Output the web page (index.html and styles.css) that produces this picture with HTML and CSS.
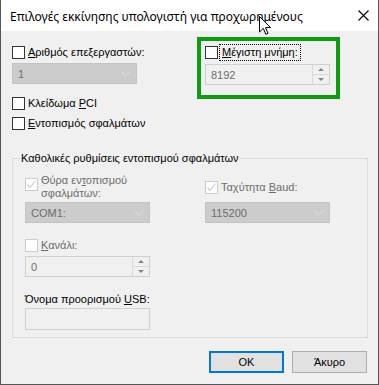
FILE: index.html
```html
<!DOCTYPE html>
<html lang="el">
<head>
  <meta charset="UTF-8">
  <meta name="viewport" content="width=device-width, initial-scale=1.0">
  <title>Επιλογές εκκίνησης για προχωρημένους</title>
  <link rel="stylesheet" href="styles.css">
</head>
<body>
<div class="window">
  <div class="titlebar">
    <span class="title">Επιλογές εκκίνησης υπολογιστή για προχωρημένους</span>
    <svg class="close" width="11" height="11" viewBox="0 0 11 11">
      <path d="M0.5 0.5 L10.5 10.5 M10.5 0.5 L0.5 10.5" stroke="#000" stroke-width="1.1" fill="none"/>
    </svg>
  </div>

  <div class="content">
    <div class="top">
      <div class="col">
        <label class="check">
          <span class="box"></span>
          <span><u>Α</u>ριθμός επεξεργαστών:</span>
        </label>
        <div class="combo combo-first">
          <span>1</span>
          <svg class="chevron" width="10" height="6" viewBox="0 0 10 6"><path d="M0.5 0.5 L5 5 L9.5 0.5" stroke="#dedede" fill="none"/></svg>
        </div>
        <label class="check check-pci">
          <span class="box"></span>
          <span>Κλείδωμα <u>P</u>CI</span>
        </label>
        <label class="check check-debug">
          <span class="box"></span>
          <span><u>Ε</u>ντοπισμός σφαλμάτων</span>
        </label>
      </div>

      <div class="col highlight">
        <label class="check">
          <span class="box"></span>
          <span class="focus"><u>Μ</u>έγιστη μνήμη:</span>
        </label>
        <div class="spin spin-mem">
          <span>8192</span>
          <div class="spin-btns">
            <span class="arrow up"></span>
            <span class="arrow down"></span>
          </div>
        </div>
      </div>
    </div>

    <fieldset class="group">
      <legend>Καθολικές ρυθμίσεις εντοπισμού σφαλμάτων</legend>
      <div class="group-grid">
        <label class="check check-port disabled">
          <span class="box checked">
            <svg width="11" height="11" viewBox="0 0 11 11"><path d="M1.5 5.5 L4 8.5 L9.5 1.5" stroke="#cfcfcf" stroke-width="1.2" fill="none"/></svg>
          </span>
          <span>Θύρα εν<u>τ</u>οπισμού<br>σφαλμάτων:</span>
        </label>
        <label class="check check-baud disabled">
          <span class="box checked">
            <svg width="11" height="11" viewBox="0 0 11 11"><path d="M1.5 5.5 L4 8.5 L9.5 1.5" stroke="#cfcfcf" stroke-width="1.2" fill="none"/></svg>
          </span>
          <span>Ταχύτητα <u>B</u>aud:</span>
        </label>

        <div class="combo combo-group">
          <span>COM1:</span>
          <svg class="chevron" width="10" height="6" viewBox="0 0 10 6"><path d="M0.5 0.5 L5 5 L9.5 0.5" stroke="#dedede" fill="none"/></svg>
        </div>
        <div class="combo combo-group">
          <span>115200</span>
          <svg class="chevron" width="10" height="6" viewBox="0 0 10 6"><path d="M0.5 0.5 L5 5 L9.5 0.5" stroke="#dedede" fill="none"/></svg>
        </div>

        <label class="check check-channel disabled left">
          <span class="box"></span>
          <span><u>Κ</u>ανάλι:</span>
        </label>
        <div class="spin spin-channel left">
          <span>0</span>
          <div class="spin-btns">
            <span class="arrow up"></span>
            <span class="arrow down"></span>
          </div>
        </div>
        <div class="field-label left">Όνομα προορισμού <u>U</u>SB:</div>
        <div class="textbox left"></div>
      </div>
    </fieldset>

    <div class="buttons">
      <button class="btn default">OK</button>
      <button class="btn">Άκυρο</button>
    </div>
  </div>

  <svg class="cursor" width="13" height="20" viewBox="0 0 13 20">
    <path d="M0.5 0.5 L0.5 16 L4.3 12.4 L6.8 18.3 L9 17.4 L6.6 11.6 L11.6 11.6 Z" fill="#fff" stroke="#000" stroke-width="1"/>
  </svg>
</div>
</body>
</html>
```

FILE: styles.css
```css
body {
  margin: 0;
  background-color: #f0f0f0;
}
.window {
  position: relative;
  width: 379px;
  height: 385px;
  box-sizing: border-box;
  border: 1px solid #555;
  border-top: none;
  background-color: #f0f0f0;
  font-family: "Liberation Sans", Arial, sans-serif;
  font-size: 11px;
  color: #000;
}
.titlebar {
  height: 31px;
  background-color: #fff;
  display: flex;
  align-items: center;
  justify-content: space-between;
  padding: 0 9px 0 9px;
}
.title {
  font-family: "Noto Sans", "Open Sans", sans-serif;
  font-size: 12px;
  padding-top: 1px;
}
.close {
  margin-right: 0;
}
.content {
  padding: 15px 10px 0 11px;
}
.top {
  display: grid;
  grid-template-columns: 125px 125px;
  column-gap: 68px;
}
.col {
  display: flex;
  flex-direction: column;
}
.highlight {
  position: relative;
}
.highlight::after {
  content: "";
  position: absolute;
  left: -8px;
  top: -9px;
  width: 143px;
  height: 62px;
  box-sizing: border-box;
  border: 4px solid #119b11;
}

/* checkboxes */
.check {
  display: flex;
  align-items: center;
  gap: 3px;
  line-height: 13px;
  white-space: nowrap;
}
.box {
  width: 13px;
  height: 13px;
  box-sizing: border-box;
  border: 1px solid #333;
  background-color: #fff;
  flex: none;
  display: flex;
  align-items: center;
  justify-content: center;
}
.disabled {
  color: #6d6d6d;
}
.disabled .box {
  border-color: #cccccc;
}
.check-pci {
  margin-top: 13px;
}
.check-debug {
  margin-top: 7px;
}
.focus {
  outline: 1px dotted #000;
  outline-offset: 1px;
  padding: 0 1px;
}

/* combos */
.combo {
  height: 21px;
  box-sizing: border-box;
  border: 1px solid #c4c4c4;
  background-color: #cccccc;
  color: #6d6d6d;
  display: flex;
  align-items: center;
  justify-content: space-between;
  padding: 0 5px 0 5px;
}
.combo-first {
  margin-top: 4px;
}
.combo-group {
  margin-top: 2px;
}

/* spinners */
.spin {
  height: 21px;
  box-sizing: border-box;
  border: 1px solid #d0d0d0;
  background-color: #f0f0f0;
  color: #6d6d6d;
  display: flex;
  align-items: center;
  justify-content: space-between;
  padding-left: 5px;
}
.spin-mem {
  margin-top: 5px;
}
.spin-btns {
  width: 17px;
  height: 100%;
  box-sizing: border-box;
  border-left: 1px solid #d9d9d9;
  display: flex;
  flex-direction: column;
}
.arrow {
  flex: 1;
  display: flex;
  align-items: center;
  justify-content: center;
}
.arrow.up {
  border-bottom: 1px solid #d9d9d9;
}
.arrow::before {
  content: "";
  width: 0;
  height: 0;
  border-left: 3px solid transparent;
  border-right: 3px solid transparent;
}
.arrow.up::before {
  border-bottom: 3px solid #838383;
}
.arrow.down::before {
  border-top: 3px solid #838383;
}

/* group box */
.group {
  margin: 20px 0 0 0;
  padding: 8px 0 7px 12px;
  border: 1px solid #dcdcdc;
  min-width: 0;
}
.group legend {
  margin-left: -5px;
  padding: 0 1px;
  line-height: 16px;
}
.group-grid {
  display: grid;
  grid-template-columns: 125px 125px;
  column-gap: 55px;
  align-items: center;
}
.left {
  grid-column: 1;
}
.check-port {
  align-items: flex-start;
}
.check-port .box {
  margin-top: 4px;
}
.check-channel {
  margin-top: 16px;
}
.spin-channel {
  margin-top: 4px;
}
.field-label {
  margin-top: 14px;
  line-height: 16px;
}
.textbox {
  margin-top: 1px;
  height: 22px;
  box-sizing: border-box;
  border: 1px solid #d0d0d0;
  background-color: #f0f0f0;
}

/* buttons */
.buttons {
  display: flex;
  justify-content: flex-end;
  gap: 8px;
  margin-top: 13px;
  margin-right: 1px;
}
.btn {
  width: 75px;
  height: 22px;
  box-sizing: border-box;
  border: 1px solid #adadad;
  background-color: #e1e1e1;
  font-family: "Liberation Sans", Arial, sans-serif;
  font-size: 11px;
  color: #000;
  padding: 0;
}
.btn.default {
  border: 2px solid #0078d7;
}

.cursor {
  position: absolute;
  left: 258px;
  top: 16px;
}
```
